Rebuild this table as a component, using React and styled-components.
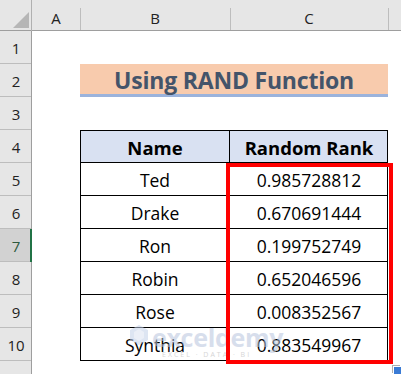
import React from "react";
import styled, { createGlobalStyle } from "styled-components";

const GlobalStyle = createGlobalStyle`
  html, body { margin: 0; padding: 0; background: #fff; }
  body { font-family: "Open Sans", "Liberation Sans", sans-serif; }
`;

const Sheet = styled.div`
  position: relative;
  width: 401px;
  height: 374px;
  overflow: hidden;
  display: grid;
  grid-template-columns: 32px 48px 150px 158px 13px;
  grid-template-rows: 31px repeat(11, 33px);
  background: #fff;
`;

const Corner = styled.div`
  display: flex;
  justify-content: flex-end;
  align-items: flex-end;
  padding: 0 3px 3px 0;
  background: #e6e6e6;
  box-shadow: inset -1px 0 0 #b0b0b0, inset 0 -1px 0 #9e9e9e;
`;

const Triangle = styled.div`
  width: 16px;
  height: 16px;
  background: #b6b6b6;
  clip-path: polygon(100% 0, 100% 100%, 0 100%);
`;

const ColHead = styled.div`
  position: relative;
  display: flex;
  align-items: center;
  justify-content: center;
  padding-top: 4px;
  background: #e6e6e6;
  box-shadow: inset 0 -1px 0 #9e9e9e;
  font-size: 15px;
  color: #222;
  &::before {
    content: "";
    position: absolute;
    left: 0;
    top: 8px;
    bottom: 1px;
    width: 1px;
    background: ${(p) => (p.$first ? "transparent" : "#bdbdbd")};
  }
`;

const RowHead = styled.div`
  display: flex;
  align-items: center;
  justify-content: center;
  padding-top: 1px;
  background: ${(p) => (p.$selected ? "#d2d2d2" : "#e6e6e6")};
  box-shadow: ${(p) =>
      p.$selected ? "inset -2px 0 0 #217346" : "inset -1px 0 0 #9e9e9e"},
    inset 0 -1px 0 #bdbdbd;
  font-size: 15px;
  color: ${(p) => (p.$selected ? "#2e5a3e" : "#222")};
`;

const Blank = styled.div`
  background: #fff;
`;

const Title = styled.div`
  grid-column: 3 / span 2;
  display: flex;
  align-items: center;
  justify-content: center;
  background: #f8cbad;
  box-shadow: inset 0 -3px 0 #9bb3dc;
  padding-bottom: 2px;
  font-size: 23px;
  font-weight: 700;
  color: #44546a;
  letter-spacing: -0.2px;
`;

const Cell = styled.div`
  display: flex;
  align-items: center;
  justify-content: center;
  padding-top: 1px;
  font-size: ${(p) => (p.$head ? "18.5px" : "17.5px")};
  font-weight: ${(p) => (p.$head ? 700 : 400)};
  color: #000;
  background: ${(p) => (p.$head ? "#d9e1f2" : "#fff")};
  box-shadow: inset -1px -1px 0 #000
    ${(p) => (p.$left ? ", inset 1px 0 0 #000" : "")}
    ${(p) => (p.$head ? ", inset 0 1px 0 #000" : "")};
`;

const Highlight = styled.div`
  position: absolute;
  left: 226px;
  top: 163px;
  width: 167px;
  height: 201px;
  box-sizing: border-box;
  border: 4px solid #ff0000;
  pointer-events: none;
`;

const Watermark = styled.div`
  position: absolute;
  left: 130px;
  top: 325px;
  display: flex;
  align-items: flex-start;
  gap: 4px;
  opacity: 0.55;
  pointer-events: none;
`;

const Brand = styled.div`
  display: flex;
  flex-direction: column;
  line-height: 1;
`;

const BrandName = styled.span`
  font-size: 25px;
  font-weight: 700;
  color: #b7c4dd;
  letter-spacing: -0.3px;
`;

const BrandSub = styled.span`
  margin-top: 1px;
  padding-left: 10px;
  font-size: 7px;
  letter-spacing: 2px;
  color: #b4b4b4;
`;

const FillHandle = styled.div`
  position: absolute;
  left: 394px;
  top: 367px;
  width: 8px;
  height: 8px;
  background: #3a7bd5;
  box-shadow: -1px -1px 0 #fff, -2px -2px 0 #b0b0b0;
`;

const rows = [
  ["Ted", "0.985728812"],
  ["Drake", "0.670691444"],
  ["Ron", "0.199752749"],
  ["Robin", "0.652046596"],
  ["Rose", "0.008352567"],
  ["Synthia", "0.883549967"],
];

const Logo = () => (
  <svg width="18" height="20" viewBox="0 0 18 20">
    <path d="M9 0 L18 5 L18 15 L9 20 L0 15 L0 5 Z" fill="#c3d0e8" />
    <path d="M9 4 L14 7 L14 13 L9 16 L4 13 L4 7 Z" fill="#dbe3f2" />
  </svg>
);

export default function App() {
  const body = [];
  rows.forEach(([name, val], i) => {
    const n = i + 5;
    body.push(
      <React.Fragment key={n}>
        <RowHead $selected={n === 7}>{n}</RowHead>
        <Blank />
        <Cell $left>{name}</Cell>
        <Cell>{val}</Cell>
        <Blank />
      </React.Fragment>
    );
  });

  return (
    <>
      <GlobalStyle />
      <Sheet>
        <Corner>
          <Triangle />
        </Corner>
        <ColHead $first>A</ColHead>
        <ColHead>B</ColHead>
        <ColHead>C</ColHead>
        <ColHead />

        <RowHead>1</RowHead>
        <Blank />
        <Blank />
        <Blank />
        <Blank />

        <RowHead>2</RowHead>
        <Blank />
        <Title>Using RAND Function</Title>
        <Blank />

        <RowHead>3</RowHead>
        <Blank />
        <Blank />
        <Blank />
        <Blank />

        <RowHead>4</RowHead>
        <Blank />
        <Cell $head $left>Name</Cell>
        <Cell $head>Random Rank</Cell>
        <Blank />

        {body}

        <RowHead />
        <Blank />
        <Blank />
        <Blank />
        <Blank />

        <Watermark>
          <Logo />
          <Brand>
            <BrandName>exceldemy</BrandName>
            <BrandSub>EXCEL · DATA · BI</BrandSub>
          </Brand>
        </Watermark>
        <Highlight />
        <FillHandle />
      </Sheet>
    </>
  );
}
